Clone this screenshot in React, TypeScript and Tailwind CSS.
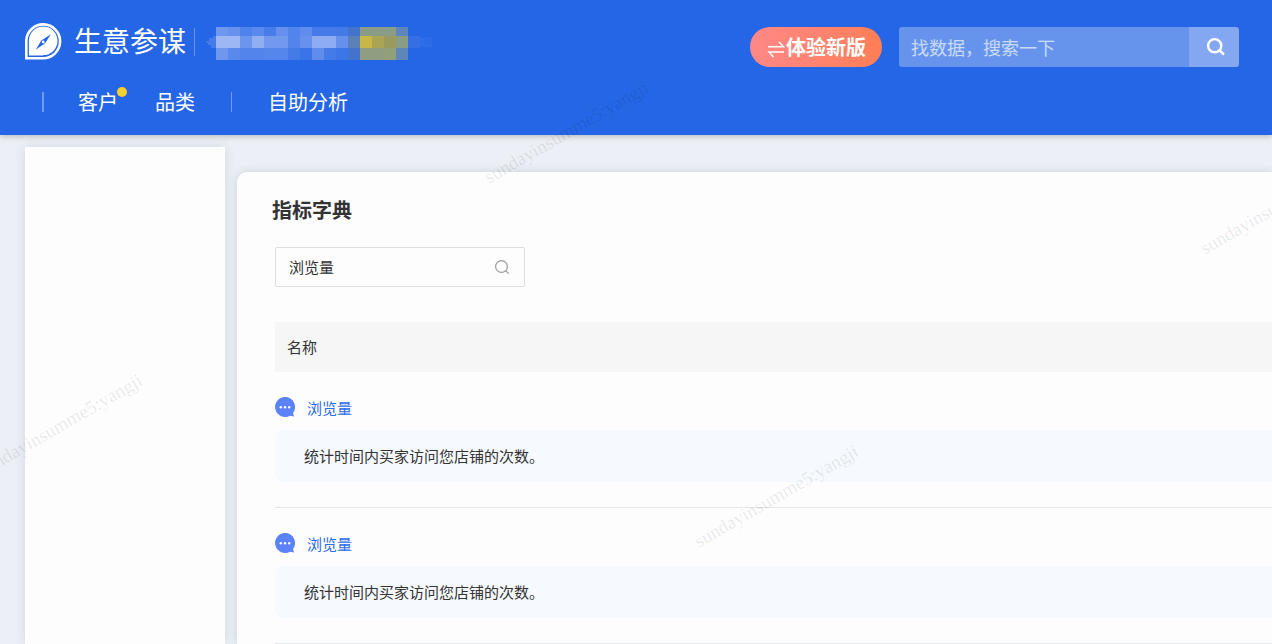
import { useState, FormEvent } from "react";

interface Metric {
  id: number;
  name: string;
  desc: string;
}

const METRICS: Metric[] = [
  { id: 1, name: "浏览量", desc: "统计时间内买家访问您店铺的次数。" },
  { id: 2, name: "浏览量", desc: "统计时间内买家访问您店铺的次数。" },
];

// Masked shop name, one colour per mosaic cell
const MOSAIC = [
  { y: 0, h: 9, cells: ["#6f97ee", "#6891ee", "#4f82ea", "#5a89ec", "#487de9", "#6690ee", "#5284eb", "#5f8ced", "#457be8", "#457be8", "#437ae8", "#4273cd", "#8a9b86", "#8a9b86", "#8a9b86", "#5f86b8"] },
  { y: 9, h: 12, cells: ["#9cb7f3", "#9cb7f3", "#6c95ee", "#90aff2", "#7299ee", "#7299ee", "#5284eb", "#6891ee", "#8dacf1", "#8dacf1", "#6690ee", "#5a82b6", "#c8b646", "#aaa554", "#9b9a5e", "#8a9b86"] },
  { y: 21, h: 12, cells: ["#6f97ee", "#5a89ec", "#5284eb", "#5284eb", "#5586eb", "#5586eb", "#457be8", "#3a74e7", "#5f8ced", "#457be8", "#3c76e7", "#4273cd", "#909d80", "#909d80", "#939f78", "#5f86b8"] },
];

const WATERMARKS = [
  { x: 489, y: 184 },
  { x: -17, y: 477 },
  { x: 699, y: 548 },
  { x: 1205, y: 255 },
];

function Logo() {
  return (
    <svg viewBox="0 0 38 38" className="h-[38px] w-[38px] shrink-0" aria-hidden="true">
      <path d="M2.300 35.200V17.600A16.900 16.900 0 1 1 19.200 35.200Z" fill="none" stroke="#fff" strokeWidth="2.600" />
      <path d="M4.900 32.600V17.800A14.300 14.300 0 1 1 19.200 32.100V32.600Z" fill="#fff" />
      <path d="M26.800 11.200 21.300 20.100 11.800 26.800 17.300 17.500Z" fill="#2566e6" />
      <circle cx="19.200" cy="18.900" r="1.400" fill="#fff" />
    </svg>
  );
}

function ShopMask() {
  return (
    <svg viewBox="0 0 226 33" className="h-[33px] w-[226px] shrink-0" aria-hidden="true">
      <path d="M0 14h3v-3h4v-2h5v12H5v-3H2v-2H0Z" fill="#467ce9" />
      {MOSAIC.map((row) =>
        row.cells.map((fill, i) => (
          <rect key={`${row.y}-${i}`} x={10 + i * 12} y={row.y} width="12" height={row.h} fill={fill} shapeRendering="crispEdges" />
        ))
      )}
      <path d="M202 9h12v12h-12Z" fill="#356fe7" />
      <path d="M214 10h12v10h-12Z" fill="#2e6be7" />
    </svg>
  );
}

function BubbleIcon() {
  return (
    <svg viewBox="0 0 20 24" className="h-6 w-5 shrink-0" aria-hidden="true">
      <path d="M10 1a10 10 0 0 1 8 16l1 3.500-4-.8A10 10 0 1 1 10 1Z" fill="#5b82fa" />
      <circle cx="5.800" cy="11.200" r="1.200" fill="#fff" />
      <circle cx="10" cy="11.200" r="1.200" fill="#fff" />
      <circle cx="14.200" cy="11.200" r="1.200" fill="#fff" />
    </svg>
  );
}

function Header() {
  const [query, setQuery] = useState("");

  function handleSearch(e: FormEvent) {
    e.preventDefault();
  }

  return (
    <header className="relative bg-[#2566e6] text-white shadow-[0_1px_6px_rgba(0,0,0,0.25)]">
      <div className="flex items-start justify-between pt-[22px] pr-[33px] pl-6">
        <div className="flex h-10 items-center">
          <Logo />
          <span className="ml-3 pb-1 text-[28px] leading-9">生意参谋</span>
          <span className="mr-[11px] ml-2 h-7 w-px bg-white/30" />
          <div className="pt-0.5">
            <ShopMask />
          </div>
        </div>

        <div className="flex items-center gap-[17px] pt-[5px]">
          <button
            type="button"
            className="flex h-10 items-center rounded-full bg-linear-to-r from-[#ff8888] to-[#ff7e55] px-4 text-xl font-bold"
          >
            <svg viewBox="0 0 20 20" className="mt-1 h-5 w-5" fill="none" stroke="currentColor" strokeWidth="1.500" aria-hidden="true">
              <path d="M2 7.800H17.500L13 3M18 13H3L7.500 18" />
            </svg>
            体验新版
          </button>

          <form onSubmit={handleSearch} className="flex h-10 w-[340px] overflow-hidden rounded-[3px]">
            <input
              type="text"
              aria-label="找数据，搜索一下"
              value={query}
              onChange={(e) => setQuery(e.target.value)}
              placeholder="找数据，搜索一下"
              className="min-w-0 flex-1 bg-white/30 px-3 text-lg placeholder:text-white/65 focus:outline-none"
            />
            <button type="submit" aria-label="搜索" className="flex w-[50px] items-center justify-center bg-white/43">
              <svg viewBox="0 0 20 20" className="ml-1 h-5 w-5" fill="none" stroke="currentColor" strokeWidth="2.400" aria-hidden="true">
                <circle cx="8.700" cy="8.700" r="6.600" />
                <path d="m13 13 5 4.500" />
              </svg>
            </button>
          </form>
        </div>
      </div>

      <nav className="flex h-[68px] items-center pt-px pl-[42px] text-xl">
        <span className="h-5 w-0.5 bg-white/35" />
        <a href="#customer" className="relative ml-[34px]">
          客户
          <span className="absolute -top-px -right-[9px] h-2.5 w-2.5 rounded-full bg-[#f3d02b]" />
        </a>
        <a href="#category" className="ml-[37px]">品类</a>
        <span className="ml-9 h-5 w-px bg-white/35" />
        <a href="#analysis" className="ml-9">自助分析</a>
      </nav>
    </header>
  );
}

export default function App() {
  const [keyword, setKeyword] = useState("浏览量");

  return (
    <div className="relative flex h-screen flex-col overflow-hidden bg-[#eceff5] font-['Noto_Sans_CJK_SC',sans-serif] text-[#333]">
      <Header />

      <div className="flex flex-1 gap-3 pl-[25px]">
        <aside className="mt-3 w-[200px] shrink-0 bg-[#fdfdfe] shadow-[0_0_10px_rgba(40,60,100,0.12)]" />

        <main className="mt-[37px] min-w-0 flex-1 rounded-tl-[10px] bg-[#fdfdfe] pt-6 pl-[35px] shadow-[0_0_10px_rgba(40,60,100,0.16)]">
          <h1 className="text-xl leading-7 font-bold">指标字典</h1>

          <div className="pl-[3px]">
            <label className="mt-[23px] flex h-10 w-[250px] items-center rounded-xs border border-[#dcdfe3] pr-3.5 pl-[13px]">
              <input
                type="text"
                aria-label="指标名称"
                value={keyword}
                onChange={(e) => setKeyword(e.target.value)}
                className="min-w-0 flex-1 text-[15px] focus:outline-none"
              />
              <svg viewBox="0 0 16 16" className="h-4 w-4" fill="none" stroke="#999" strokeWidth="1.200" aria-hidden="true">
                <circle cx="7.500" cy="7.500" r="5.900" />
                <path d="m11.700 11.700 3 3" />
              </svg>
            </label>

            <table className="mt-[35px] w-full border-collapse text-[15px]">
              <thead>
                <tr className="h-[50px] bg-[#f6f6f7]">
                  <th className="px-3 text-left font-normal">名称</th>
                </tr>
              </thead>
              <tbody>
                {METRICS.map((m) => (
                  <tr key={m.id}>
                    <td className="p-0">
                      <div className="border-b border-[#e6e7ea] pt-6 pb-[25px]">
                        <a href={`#metric-${m.id}`} className="flex items-center gap-3 leading-6 text-[#2a6bea]">
                          <BubbleIcon />
                          {m.name}
                        </a>
                        <p className="mt-2.5 rounded-l-lg bg-[#f6f9fe] py-3.5 pl-[29px] leading-6">{m.desc}</p>
                      </div>
                    </td>
                  </tr>
                ))}
              </tbody>
            </table>
          </div>
        </main>
      </div>

      {/* Watermark */}
      <svg className="pointer-events-none absolute inset-0 h-full w-full" aria-hidden="true">
        {WATERMARKS.map((w) => (
          <text
            key={`${w.x}-${w.y}`}
            transform={`translate(${w.x} ${w.y}) rotate(-30)`}
            className="fill-black/9 font-['Liberation_Serif',serif] text-[19px]"
          >
            sundayinsumme5:yangji
          </text>
        ))}
      </svg>
    </div>
  );
}
